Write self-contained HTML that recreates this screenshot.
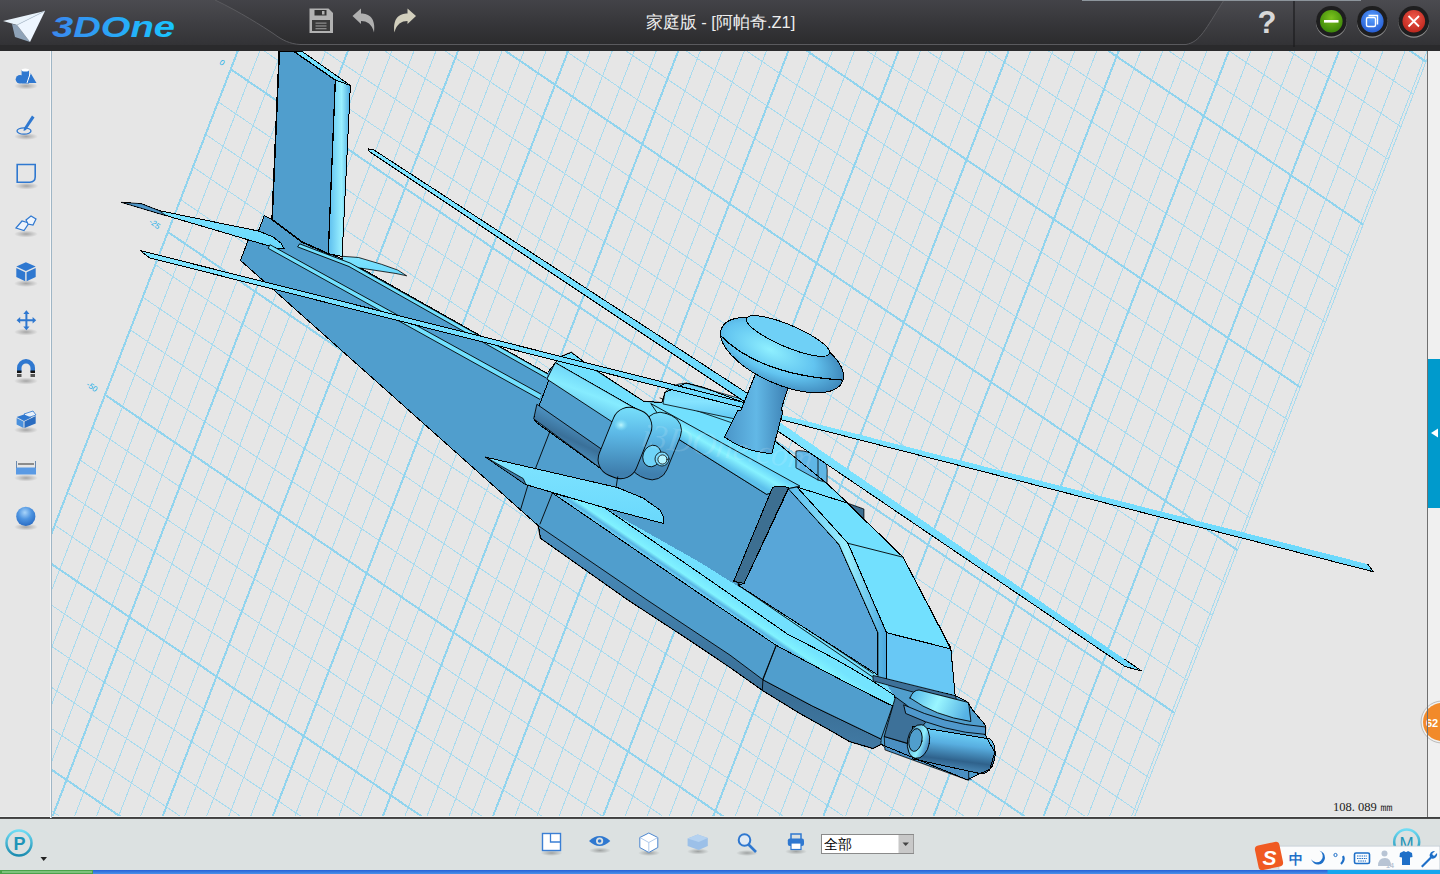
<!DOCTYPE html>
<html><head><meta charset="utf-8">
<style>
html,body{margin:0;padding:0;width:1440px;height:874px;overflow:hidden;background:#e6e6e6;font-family:"Liberation Sans",sans-serif;}
#top{position:absolute;left:0;top:0;width:1440px;height:51px;background:linear-gradient(#3f3f44,#2c2c2e);}
#left{position:absolute;left:0;top:51px;width:51px;height:767px;background:#e6e6e6;}
#leftline{position:absolute;left:51px;top:51px;width:1px;height:767px;background:#9fb6c6;box-shadow:-1px 0 0 #f6f6f6;}
#right{position:absolute;left:1428px;top:51px;width:12px;height:767px;background:#f0f0f0;}
#rightline{position:absolute;left:1427px;top:51px;width:1px;height:766px;background:#707070;}
#bottom{position:absolute;left:0;top:817px;width:1440px;height:57px;background:#dce1e1;}
#bline{position:absolute;left:0;top:816px;width:1440px;height:3px;background:linear-gradient(#eef0f0 0,#eef0f0 33%,#3a3a3a 33%,#505050 100%);}
#task{position:absolute;left:0;top:870px;width:1440px;height:4px;background:#2f6fd4;}
svg{position:absolute;left:0;top:0;}
</style></head><body>
<svg width="1440" height="51" viewBox="0 0 1440 51" style="position:absolute;left:0;top:0">
<defs>
<linearGradient id="tb" x1="0" y1="0" x2="0" y2="1"><stop offset="0" stop-color="#4b4b50"/><stop offset="1" stop-color="#323235"/></linearGradient>
<linearGradient id="tb2" x1="0" y1="0" x2="0" y2="1"><stop offset="0" stop-color="#434348"/><stop offset="1" stop-color="#2b2b2d"/></linearGradient>
<linearGradient id="logo" x1="0" y1="0" x2="1" y2="0"><stop offset="0" stop-color="#3a88ee"/><stop offset="1" stop-color="#19c6ff"/></linearGradient>
<radialGradient id="gbtn" cx="0.5" cy="0.35" r="0.6"><stop offset="0" stop-color="#7cc21e"/><stop offset="1" stop-color="#3f8a0a"/></radialGradient>
<radialGradient id="bbtn" cx="0.5" cy="0.35" r="0.6"><stop offset="0" stop-color="#5aa2ff"/><stop offset="1" stop-color="#2a62d8"/></radialGradient>
<radialGradient id="rbtn" cx="0.5" cy="0.35" r="0.6"><stop offset="0" stop-color="#f0584a"/><stop offset="1" stop-color="#c02a20"/></radialGradient>
</defs>
<rect x="0" y="0" width="1440" height="51" fill="#2b2b2d"/>
<rect x="0" y="0" width="1440" height="46" fill="url(#tb)"/>
<path d="M215 0 C240 12 262 26 274 34 C282 40 290 44 300 44.5 L1186 44.5 C1200 42 1205 30 1224 0 Z" fill="url(#tb2)"/>
<path d="M215 0 C240 12 262 26 274 34 C282 40 290 44 300 44.5 L1186 44.5 C1200 42 1205 30 1224 0" fill="none" stroke="#5a5a5e" stroke-width="1"/>
<rect x="0" y="45" width="1440" height="6" fill="#2a2a2c"/>
<line x1="1082" y1="0.5" x2="1361" y2="0.5" stroke="#8d959c" stroke-width="1"/>
<line x1="1294" y1="1" x2="1294" y2="47" stroke="#1c1c1e" stroke-width="1.2"/>
<!-- plane -->
<polygon points="3,21 45,11 17,25" fill="#e8f2fa"/>
<polygon points="12,24 17,25 30,42 15,37" fill="#8fa3b8"/>
<polygon points="17,25 45,11 30,42" fill="#eef6ff"/>
<line x1="17" y1="25" x2="45" y2="11" stroke="#b8c8d8" stroke-width="0.8"/>
<text x="52" y="36.5" font-family="Liberation Sans, sans-serif" font-weight="bold" font-style="italic" font-size="29" fill="url(#logo)" textLength="123" lengthAdjust="spacingAndGlyphs">3DOne</text>
<!-- save -->
<path d="M309.5 8.5 H328.5 L333 13 V33 H309.5 Z" fill="#b2b2b2"/>
<rect x="314.5" y="10" width="12" height="5.5" fill="#333"/>
<rect x="322" y="11" width="2.5" height="3.5" fill="#b2b2b2"/>
<rect x="312" y="20" width="18" height="11" fill="#3a3a3a"/>
<rect x="315.5" y="22.5" width="11" height="1.3" fill="#888"/><rect x="315.5" y="25.3" width="11" height="1.3" fill="#888"/><rect x="315.5" y="28" width="11" height="1.3" fill="#888"/>
<!-- undo -->
<path d="M352.5 16 L361 8.5 V13.5 C369 13.5 376 18 374 32.5 C372 24 367 21 361 21 V24 Z" fill="#b0b0b0"/>
<!-- redo -->
<path d="M416 16 L407.5 8.5 V13.5 C399.5 13.5 392.5 18 394.5 32.5 C396.5 24 401.5 21 407.5 21 V24 Z" fill="#d2cfbd"/>
<text x="720.5" y="27.5" font-family="Liberation Sans, sans-serif" font-size="16.5" fill="#eeeeee" text-anchor="middle">家庭版 - [阿帕奇.Z1]</text>
<text x="1267" y="32.5" font-family="Liberation Sans, sans-serif" font-weight="bold" font-size="31" fill="#d8d8d8" text-anchor="middle">?</text>
<!-- buttons -->
<g>
<circle cx="1331.3" cy="22.5" r="15.3" fill="#8a8a8a"/>
<circle cx="1331.3" cy="21.3" r="15.3" fill="#1e1e1f"/>
<circle cx="1331.3" cy="21.3" r="11.3" fill="url(#gbtn)"/>
<rect x="1324" y="20" width="14.5" height="2.6" fill="#fff"/>
<circle cx="1372.3" cy="22.5" r="15.3" fill="#8a8a8a"/>
<circle cx="1372.3" cy="21.3" r="15.3" fill="#1e1e1f"/>
<circle cx="1372.3" cy="21.3" r="11.3" fill="url(#bbtn)"/>
<rect x="1366.5" y="17.5" width="9" height="9" rx="1.5" fill="none" stroke="#fff" stroke-width="1.4"/>
<path d="M1368.5 15.5 H1377.5 V24.5" fill="none" stroke="#fff" stroke-width="1.4"/>
<circle cx="1413.8" cy="22.5" r="15.3" fill="#8a8a8a"/>
<circle cx="1413.8" cy="21.3" r="15.3" fill="#1e1e1f"/>
<circle cx="1413.8" cy="21.3" r="11.3" fill="url(#rbtn)"/>
<path d="M1408.5 16 L1419 26.5 M1419 16 L1408.5 26.5" stroke="#fff" stroke-width="1.8"/>
</g>
</svg>
<div id="left"></div>
<div id="right"></div>
<div id="bottom"></div>
<div id="bline"></div>
<div id="task"></div>
<svg width="1440" height="874" viewBox="0 0 1440 874"><defs><clipPath id="vp"><rect x="52" y="51" width="1375" height="765"/></clipPath><linearGradient id="gLight" x1="0" y1="0" x2="0" y2="1"><stop offset="0" stop-color="#6fd3f8"/><stop offset="0.5" stop-color="#86e4ff"/><stop offset="1" stop-color="#5ec6f2"/></linearGradient>
<linearGradient id="gStrip" x1="0" y1="0" x2="1" y2="0"><stop offset="0" stop-color="#5bbdee"/><stop offset="0.6" stop-color="#9af0ff"/><stop offset="1" stop-color="#4aa8de"/></linearGradient>
<linearGradient id="gBlade" x1="0" y1="0" x2="0" y2="1"><stop offset="0" stop-color="#7fe4ff"/><stop offset="1" stop-color="#6ad8fc"/></linearGradient>
<linearGradient id="gPod" x1="0" y1="0" x2="0.35" y2="1"><stop offset="0" stop-color="#62c6f2"/><stop offset="0.35" stop-color="#80e2ff"/><stop offset="0.6" stop-color="#5cb0e0"/><stop offset="1" stop-color="#3f86b8"/></linearGradient>
<linearGradient id="gHull" x1="0" y1="0" x2="0.3" y2="1"><stop offset="0" stop-color="#58a4d6"/><stop offset="0.7" stop-color="#4f98cb"/><stop offset="1" stop-color="#3b78a6"/></linearGradient>
<linearGradient id="gRail" x1="0" y1="0" x2="0.25" y2="1"><stop offset="0" stop-color="#5fbfee"/><stop offset="0.5" stop-color="#90eeff"/><stop offset="1" stop-color="#58b4e6"/></linearGradient>
<radialGradient id="gDome" cx="0.4" cy="0.5" r="0.6"><stop offset="0" stop-color="#8ff0ff"/><stop offset="0.6" stop-color="#62c4f0"/><stop offset="1" stop-color="#3f88bb"/></radialGradient>
<linearGradient id="gMast" x1="0" y1="0" x2="1" y2="0"><stop offset="0" stop-color="#4a95c8"/><stop offset="0.5" stop-color="#62b8e6"/><stop offset="1" stop-color="#3c7fb2"/></linearGradient>
<linearGradient id="gPodTop" x1="0.3" y1="0" x2="0" y2="0.6"><stop offset="0" stop-color="#66cdf5"/><stop offset="0.5" stop-color="#86ecff"/><stop offset="1" stop-color="#5cbbe8"/></linearGradient>
<linearGradient id="gPodBot" x1="0.25" y1="0" x2="0" y2="0.5"><stop offset="0" stop-color="#55a0d2"/><stop offset="0.6" stop-color="#3a7099"/><stop offset="1" stop-color="#4f95c4"/></linearGradient>
<linearGradient id="gBand" x1="0" y1="0" x2="-0.2" y2="1"><stop offset="0" stop-color="#4b90c0"/><stop offset="0.6" stop-color="#3a6e95"/><stop offset="1" stop-color="#4a88b5"/></linearGradient>
<linearGradient id="gTube" gradientUnits="userSpaceOnUse" x1="650" y1="540.1" x2="640.7" y2="553.7"><stop offset="0" stop-color="#74e4fe"/><stop offset="0.55" stop-color="#80f2ff"/><stop offset="0.78" stop-color="#58b4e4"/><stop offset="0.9" stop-color="#6accf2"/><stop offset="1" stop-color="#5cbcea"/></linearGradient>
<linearGradient id="gDeckTube" gradientUnits="userSpaceOnUse" x1="720" y1="441.7" x2="711" y2="457"><stop offset="0" stop-color="#6ad6fa"/><stop offset="0.45" stop-color="#86f2ff"/><stop offset="1" stop-color="#5cc0ec"/></linearGradient>
<linearGradient id="gCap" x1="0" y1="0" x2="0.2" y2="1"><stop offset="0" stop-color="#7ce6ff"/><stop offset="0.45" stop-color="#5cb8e6"/><stop offset="1" stop-color="#3f7fae"/></linearGradient>
<linearGradient id="gGun" gradientUnits="userSpaceOnUse" x1="955" y1="730" x2="950" y2="770"><stop offset="0" stop-color="#6fd6fc"/><stop offset="0.35" stop-color="#58aee0"/><stop offset="0.75" stop-color="#2f628c"/><stop offset="1" stop-color="#4a8ab8"/></linearGradient>
<linearGradient id="gGunCap" x1="0" y1="0" x2="1" y2="0.3"><stop offset="0" stop-color="#4a8fc2"/><stop offset="0.7" stop-color="#8ef0ff"/><stop offset="1" stop-color="#4f98cc"/></linearGradient>
<linearGradient id="gRing" gradientUnits="userSpaceOnUse" x1="915" y1="692" x2="965" y2="716"><stop offset="0" stop-color="#5ec0ec"/><stop offset="0.45" stop-color="#9af6ff"/><stop offset="1" stop-color="#56b2e4"/></linearGradient>
<radialGradient id="gHi"><stop offset="0" stop-color="#c8faff" stop-opacity="0.9"/><stop offset="1" stop-color="#8ef0ff" stop-opacity="0"/></radialGradient>
</defs><g clip-path="url(#vp)">
<path d="M264.04 40L-40.88 830M286.07 40L-18.86 830M308.09 40L3.17 830M330.12 40L25.19 830M374.16 40L69.24 830M396.19 40L91.26 830M418.21 40L113.29 830M440.23 40L135.31 830M484.28 40L179.36 830M506.31 40L201.38 830M528.33 40L223.40 830M550.35 40L245.43 830M594.40 40L289.48 830M616.42 40L311.50 830M638.45 40L333.52 830M660.47 40L355.55 830M704.52 40L399.59 830M726.54 40L421.62 830M748.57 40L443.64 830M770.59 40L465.67 830M814.64 40L509.71 830M836.66 40L531.74 830M858.68 40L553.76 830M880.71 40L575.78 830M924.76 40L619.83 830M946.78 40L641.86 830M968.80 40L663.88 830M990.83 40L685.90 830M1034.87 40L729.95 830M1056.90 40L751.97 830M1078.92 40L774.00 830M1100.95 40L796.02 830M1144.99 40L840.07 830M1167.02 40L862.09 830M1189.04 40L884.12 830M1211.06 40L906.14 830M1255.11 40L950.19 830M1277.13 40L972.21 830M1299.16 40L994.23 830M1321.18 40L1016.26 830M1365.23 40L1060.31 830M1387.25 40L1082.33 830M1409.28 40L1104.35 830M1431.30 40L1126.38 830M1434.38 40L1129.46 830M-70.89 850.70L873.02 1494.40M-58.32 818.14L885.58 1461.84M-45.76 785.57L898.15 1429.28M-33.19 753.01L910.72 1396.72M-8.05 687.89L935.85 1331.60M4.51 655.33L948.42 1299.04M17.08 622.77L960.99 1266.47M29.65 590.21L973.56 1233.91M54.79 525.09L998.69 1168.79M67.35 492.53L1011.26 1136.23M79.92 459.97L1023.83 1103.67M92.49 427.41L1036.40 1071.11M117.62 362.29L1061.53 1005.99M130.19 329.73L1074.10 973.43M142.76 297.17L1086.67 940.87M155.33 264.61L1099.23 908.31M180.46 199.48L1124.37 843.19M193.03 166.92L1136.94 810.63M205.60 134.36L1149.51 778.07M218.17 101.80L1162.07 745.51M243.30 36.68L1187.21 680.38M255.87 4.12L1199.78 647.82M268.44 -28.44L1212.34 615.26M281.00 -61.00L1224.91 582.70M306.14 -126.12L1250.05 517.58M318.71 -158.68L1262.61 485.02M331.28 -191.24L1275.18 452.46M343.84 -223.80L1287.75 419.90M368.98 -288.92L1312.89 354.78M381.55 -321.48L1325.45 322.22M394.11 -354.04L1338.02 289.66M406.68 -386.61L1350.59 257.10M431.82 -451.73L1375.72 191.98M444.39 -484.29L1388.29 159.42M456.95 -516.85L1400.86 126.86M469.52 -549.41L1413.43 94.29M494.66 -614.53L1438.56 29.17M507.22 -647.09L1451.13 -3.39M519.79 -679.65L1463.70 -35.95M532.36 -712.21L1476.27 -68.51" stroke="#a9dbee" stroke-width="1" fill="none" shape-rendering="crispEdges"/>
<path d="M242.02 40L-62.90 830M352.14 40L47.22 830M462.26 40L157.33 830M572.38 40L267.45 830M682.49 40L377.57 830M792.61 40L487.69 830M902.73 40L597.81 830M1012.85 40L707.93 830M1122.97 40L818.04 830M1233.09 40L928.16 830M1343.21 40L1038.28 830M-83.46 883.26L860.45 1526.96M-20.62 720.45L923.29 1364.16M42.22 557.65L986.12 1201.35M105.06 394.85L1048.96 1038.55M167.90 232.05L1111.80 875.75M230.73 69.24L1174.64 712.95M293.57 -93.56L1237.48 550.14M356.41 -256.36L1300.32 387.34M419.25 -419.17L1363.16 224.54M482.09 -581.97L1426.00 61.73" stroke="#91d4ee" stroke-width="2" fill="none" shape-rendering="crispEdges"/>
<text x="221.9" y="62.8" transform="rotate(36 221.9 62.8)" font-family="Liberation Sans, sans-serif" font-size="8" fill="#22aee6" text-anchor="middle" dominant-baseline="central">0</text>
<text x="154.7" y="224.2" transform="rotate(36 154.7 224.2)" font-family="Liberation Sans, sans-serif" font-size="8" fill="#22aee6" text-anchor="middle" dominant-baseline="central">-25</text>
<text x="91.9" y="387" transform="rotate(36 91.9 387)" font-family="Liberation Sans, sans-serif" font-size="8" fill="#22aee6" text-anchor="middle" dominant-baseline="central">-50</text>
</g><g clip-path="url(#vp)"><g id="heli" stroke-linejoin="round" stroke-linecap="round" shape-rendering="crispEdges">
<!-- boom -->
<path d="M264.3 215.6 L272.1 219.7 L302.3 242.1 L328.4 253.1 L350 262 L548.6 374.2 L555 420 L540 524 L538.4 525.8 L240.5 260.4 L248.8 238.4 L258.4 231.1 Z" fill="#509ecd" stroke="#000" stroke-width="1"/>
<!-- left stabilizer (over boom) -->
<path d="M122 202.4 L141.2 203.7 L159 210.6 L259.3 231.2 L273 237 L281 243 L284 248.5 L276 248 L163.2 214.7 Z" fill="url(#gBlade)" stroke="#000" stroke-width="1"/>
<path d="M122 202.4 L141.2 203.7 L159 210.6 L166 215.5 Z" fill="#4f97c9" stroke="#000" stroke-width="0.8"/>
<!-- fin -->
<path d="M279.3 51 L293.5 51 L335.5 80 L328.4 253.8 L302.3 242.1 L272.1 219.7 Z" fill="#509ecd" stroke="#000" stroke-width="1.6"/>
<path d="M293.5 51 L301.5 51 L350.4 85.5 L335.5 80 Z" fill="#72e0fe" stroke="#000" stroke-width="1"/>
<path d="M335.5 80 L350.4 85.5 L342.1 256.5 L328.4 253.8 Z" fill="url(#gStrip)" stroke="#000" stroke-width="1"/>
<!-- right stabilizer -->
<path d="M342.6 256.3 L358.6 257.5 L381.5 264.3 L397.6 270 L406.7 275.8 L396 273.5 L358.6 267.8 L342.6 262 Z" fill="url(#gBlade)" stroke="#000" stroke-width="0.8"/>
<!-- boom rails -->
<path d="M300 244 L350 263 L548.6 374.5 L548 379 L349 266.5 L298 247 Z" fill="#72e0fe" stroke="#000" stroke-width="0.9"/>
<path d="M270.3 244.9 L548 398 L546.5 403 L268.5 248.5 Z" fill="#72e0fe" stroke="#000" stroke-width="0.9"/>

<!-- main fuselage silhouette -->
<path d="M548 372 L555.6 362.5 L561.3 356.3 L571.3 352.5 L590 366.3 L643.8 401.3 L661.9 402.5 L665 392.5 L686.3 383.1 L703.8 387.5 L745 403 L770 436.9 L827.2 483.8 L848 503.3 L863.9 519.3 L903 557.2 L950.8 648 L955.2 695.7 L967 701.7 L973.1 710.6 L985.7 725.5 L985 734.4 L994.7 752.3 L990 769 L967.1 779.8 L881 744.4 L872.9 748.5 L849.5 741.6 L833 732 L798.7 712.8 L763 690.8 L730 667.5 L690 640.6 L627.9 600 L540.6 538.4 L538.4 525.8 L533.7 418.7 Z" fill="#509ecd" stroke="none"/>
<!-- top deck -->
<path d="M555.5 362.8 L561.2 356.4 L571.4 352.1 L589.2 366.2 L643.8 401.3 L661.9 402.5 L665 392.5 L686.3 383.1 L703.8 387.5 L745 403 L770 436.9 L827.2 483.8 L848 503.3 L788.6 488.6 L781 490 L766.5 494.3 L673 435.7 L660 426 L637.2 409.6 Z" fill="#72e0fe" stroke="#000" stroke-width="0.8"/>
<path d="M651.1 403.7 L800 486.1 L788.6 488.6 L781 490 L766.5 494.3 L673 435.7 Z" fill="url(#gDeckTube)" stroke="#000" stroke-width="0.9"/>
<path d="M660 398 L770 436 M700 391 L790 430" fill="none" stroke="#000" stroke-width="0.8"/>
<!-- hull bottom dark band -->
<path d="M538.4 525.8 L647.1 600 L730 655.1 L763 679.8 L812.4 706 L881 739 L881 744.4 L872.9 748.5 L849.5 741.6 L833 732 L798.7 712.8 L763 690.8 L730 667.5 L690 640.6 L627.9 600 L540.6 538.4 Z" fill="url(#gBand)" stroke="#000" stroke-width="0.9"/>
<!-- hull segment split -->
<path d="M552.4 493 L540 524" fill="none" stroke="#000" stroke-width="0.9"/>
<!-- hull front segment -->
<path d="M778 645.5 L890 703.2 L895.7 697.2 L881 739 L812.4 706 L763 679.8 L776.7 644.1 Z" fill="#509ecd" stroke="#000" stroke-width="0.9"/>
<path d="M776.7 644.1 L763 678.5 L762.3 690.8" fill="none" stroke="#000" stroke-width="0.9"/>
<!-- ledge above tube -->
<path d="M603.2 506.8 L622.4 518.5 L700 562.4 L873 671 L886 682 L894 697 L788.9 635.1 Z" fill="#72e0fe" stroke="none"/>
<path d="M734.9 581 L873.2 673.5 M738 585 L873 677.2" fill="none" stroke="#000" stroke-width="0.9"/>
<!-- tube -->
<path d="M552.4 493 L603.2 506.8 L700 573.4 L788.9 635.1 Q850 665 894.8 695.7 L896 706 L890 704.7 Q840 680 776 645.2 L700 594 Z" fill="url(#gTube)" stroke="#000" stroke-width="1"/>
<!-- stub wing -->
<path d="M485.7 457.2 L532.6 468 L617.3 487.5 L643 498 L660 510 L664 518 L663.5 523.5 L603.6 507.5 L525.8 484.6 Z" fill="url(#gBlade)" stroke="#000" stroke-width="1"/>
<path d="M485.7 457.2 L523.2 478.5 L526 484.6 Z" fill="#3f7eaa" stroke="#000" stroke-width="0.8"/>
<path d="M520 460 L480 458" stroke="none"/>

<!-- engine pod body -->
<path d="M555.5 362.8 L637.2 409.6 L622 470 L611.6 476.4 L537.4 423.3 L534 419.1 Z" fill="#509ecd" stroke="#000" stroke-width="1"/>
<path d="M555.5 362.8 L637.2 409.6 L626 431 L547.2 379.3 Z" fill="url(#gPodTop)" stroke="#000" stroke-width="0.9"/>
<path d="M537.2 404.5 L610 455 L611.6 476.4 L534 419.1 Z" fill="url(#gPodBot)" stroke="#000" stroke-width="0.9"/>
<!-- far cap -->
<rect x="637" y="412" width="38" height="68" rx="16" transform="rotate(22 656 446)" fill="url(#gCap)" stroke="#000" stroke-width="0.8"/>
<!-- front cap -->
<rect x="605" y="407" width="40" height="72" rx="17" transform="rotate(22 625 443)" fill="url(#gCap)" stroke="#000" stroke-width="0.9"/>
<ellipse cx="621" cy="425" rx="7" ry="6" fill="url(#gHi)"/>
<!-- nozzle -->
<ellipse cx="652" cy="456" rx="9" ry="11" transform="rotate(20 652 456)" fill="#6fd3f8" stroke="#000" stroke-width="0.8"/>
<circle cx="662" cy="459" r="7" fill="#7fdcff" stroke="#000" stroke-width="0.8"/>
<circle cx="662.5" cy="459.5" r="4.6" fill="#b5f4ff" stroke="#000" stroke-width="0.8"/>

<!-- right pod (far side) -->
<path d="M665 392.5 Q670 384 686.3 383.1 L745 400 L752 411 L740 420 L663.4 404 Z" fill="url(#gLight)" stroke="#000" stroke-width="0.8"/>
<!-- right small exhaust pod -->
<path d="M796.3 451 Q800 449 818 455 Q827 460 827.2 470 L827 482.7 L818 480 L796.3 468 Z" fill="#5fb6e6" stroke="#000" stroke-width="0.8"/>
<line x1="818" y1="456" x2="818" y2="480" stroke="#000" stroke-width="0.8"/>

<!-- canopy -->
<path d="M733.7 581.3 L772.6 487.5 Q776 485 788.6 487.5 L744 583.5 Z" fill="#3d6f91" stroke="#000" stroke-width="1"/>
<path d="M744 583.5 L788.6 488.6 L839 544.6 L877.9 632.7 L877.9 675 L738 585 Z" fill="#58a6d8" stroke="#000" stroke-width="1"/>
<path d="M788.6 488.6 L797 487 L848 543.3 L886.5 632.6 L886.5 680.4 L877.9 680.4 L877.9 632.7 L839 544.6 Z" fill="url(#gStrip)" stroke="#000" stroke-width="0.9"/>
<path d="M797 487 L848 503.3 L903 557.2 L950.8 648.9 L886.5 632.6 L848 543.3 Z" fill="#72e0fe" stroke="#000" stroke-width="1"/>
<path d="M848 543.3 L903 557.2" fill="none" stroke="#000" stroke-width="0.9"/>
<path d="M848 503.3 L863.9 509 L863.9 519.3 Z" fill="#3d6f91" stroke="#000" stroke-width="0.8"/>
<!-- windshield -->
<path d="M886 632.6 L950.8 648.9 L955.2 695.7 L886 680.4 Z" fill="#68c8f5" stroke="#000" stroke-width="1"/>

<!-- nose -->
<path d="M873.4 675.5 L955.2 695.7 L957 701 L916.5 693 L873.4 681 Z" fill="#3d7199" stroke="#000" stroke-width="0.8"/>
<path d="M879.6 739 L885.3 747.8 L930 762 L968.7 776 L972 780 L967.1 779.8 L885.3 750 Z" fill="#3b7099"/>
<path d="M884.6 736.6 L912 745 L968.7 771 L968.7 780.4 L885.3 750 Z" fill="#4a8fc2" stroke="#000" stroke-width="0.8"/>
<path d="M895.7 697.2 L906 704.6 L925.5 722.5 L907.6 743.3 L884.6 736.6 Z" fill="#3d7199" stroke="#000" stroke-width="0.9"/>
<path d="M904 705 Q945 724 985.7 727 L985.5 734.4 Q945 732 906 713.6 Z" fill="#4f98cc" stroke="#000" stroke-width="0.9"/>
<path d="M910 698 Q913 690 919 690 L968.6 702.5 L970.9 721.5 Q935 716 910 698 Z" fill="url(#gRing)" stroke="#000" stroke-width="0.9"/>
<path d="M912 726 L990.4 739 Q996 745 995 756 Q993 772 982 774 L912 758.7 Z" fill="url(#gGun)" stroke="#000" stroke-width="1"/>
<ellipse cx="918.5" cy="741.5" rx="11" ry="17" transform="rotate(10 918.5 741.5)" fill="url(#gGunCap)" stroke="#000" stroke-width="0.9"/>
<ellipse cx="915.5" cy="740" rx="6.5" ry="11.5" transform="rotate(10 915.5 740)" fill="#509ecd" stroke="#000" stroke-width="0.9"/>

<!-- silhouette outline -->
<path d="M548 372 L555.6 362.5 L561.3 356.3 L571.3 352.5 L590 366.3 L643.8 401.3 L661.9 402.5 L665 392.5 L686.3 383.1 L703.8 387.5 L745 403 L770 436.9 L827.2 483.8 L848 503.3 L863.9 519.3 L903 557.2 L950.8 648 L955.2 695.7 L967 701.7 L973.1 710.6 L985.7 725.5 L985 734.4 L994.7 752.3 L990 769 L967.1 779.8 L881 744.4 L872.9 748.5 L849.5 741.6 L833 732 L798.7 712.8 L763 690.8 L730 667.5 L690 640.6 L627.9 600 L540.6 538.4 L538.4 525.8" fill="none" stroke="#000" stroke-width="1"/>
<!-- panel lines -->
<path d="M549.7 432 L535.3 468.9 M528 484.9 L520.8 508.9 M617.7 476.9 L616.1 487.3" fill="none" stroke="#000" stroke-width="0.9"/>
<!-- blades -->
<path d="M368.2 148.9 L374 150 L776 412 L772 420 L368.9 151.2 Z" fill="url(#gBlade)" stroke="#000" stroke-width="1"/>
<path d="M140.3 250.6 L760 406.5 L760 412 L149.4 257.8 Z" fill="url(#gBlade)" stroke="#000" stroke-width="1"/>
<path d="M777.8 413.9 L1367.6 564.1 L1373.6 571.8 L777.8 418.9 Z" fill="url(#gBlade)"/>
<path d="M777.8 418.9 L1373.6 571.8 L1367.6 564.1" fill="none" stroke="#000" stroke-width="1"/>
<path d="M776.5 420 L1125 659.5 L1141.7 671 L1124.9 666.5 L774 428.5 Z" fill="url(#gBlade)"/>
<path d="M774 428.5 L1124.9 666.5 L1141.7 671 L1125 659.5" fill="none" stroke="#000" stroke-width="1"/>

<!-- mast -->
<path d="M755.4 374 L788.3 386.5 L781 410 L783 411 L771.8 453.5 Q745 452 724.5 437 L738 410 L741 410 Z" fill="url(#gMast)" stroke="#000" stroke-width="1"/>
<!-- dome -->
<ellipse cx="782" cy="355" rx="66" ry="29" transform="rotate(24 782 355)" fill="url(#gDome)" stroke="#000" stroke-width="1"/>
<path d="M721 336 Q760 375 842 380" fill="none" stroke="#000" stroke-width="1.2"/>
<ellipse cx="788" cy="336" rx="45" ry="11" transform="rotate(23 788 336)" fill="#6fd0f6" stroke="#000" stroke-width="1"/>
<text x="640" y="446" font-family="Liberation Serif, serif" font-style="italic" font-size="34" fill="#fff" fill-opacity="0.12" transform="rotate(8 640 446)">i3DOne.com</text>
</g>
</g></svg><svg width="1440" height="874" viewBox="0 0 1440 874" style="position:absolute;left:0;top:0">
<defs>
<radialGradient id="shd" cx="0.5" cy="0.5" r="0.5"><stop offset="0" stop-color="#000" stop-opacity="0.28"/><stop offset="1" stop-color="#000" stop-opacity="0"/></radialGradient>
<radialGradient id="sph" cx="0.45" cy="0.3" r="0.7"><stop offset="0" stop-color="#a8d4fa"/><stop offset="0.5" stop-color="#4e94e0"/><stop offset="1" stop-color="#2a6cc4"/></radialGradient>
<linearGradient id="tbar" x1="0" y1="0" x2="0" y2="1"><stop offset="0" stop-color="#2660d6"/><stop offset="1" stop-color="#4a92ea"/></linearGradient>
<linearGradient id="pcirc" x1="0" y1="0" x2="0" y2="1"><stop offset="0" stop-color="#6fdcf4"/><stop offset="1" stop-color="#1c8cb0"/></linearGradient>
</defs>
<!-- left toolbar shadows -->
<g fill="url(#shd)">
<ellipse cx="26" cy="86" rx="12" ry="3.5"/><ellipse cx="26" cy="136.5" rx="12" ry="3.5"/><ellipse cx="26.5" cy="186" rx="12" ry="3.5"/>
<ellipse cx="26" cy="234" rx="12" ry="3.5"/><ellipse cx="26" cy="283.5" rx="12" ry="3.5"/><ellipse cx="26" cy="332" rx="12" ry="3.5"/>
<ellipse cx="26" cy="381" rx="12" ry="3.5"/><ellipse cx="26" cy="430" rx="12" ry="3.5"/><ellipse cx="26" cy="478" rx="12" ry="3.5"/>
<ellipse cx="26" cy="527" rx="12" ry="3.5"/>
</g>
<g fill="#2f78d0">
<!-- icon1 primitives -->
<circle cx="20" cy="79.3" r="4.3"/>
<rect x="21.6" y="70" width="7.4" height="13.5"/>
<ellipse cx="25.3" cy="70" rx="3.7" ry="1.5" fill="#fff"/>
<polygon points="30.7,73.3 36.5,83 26.5,83"/>
<line x1="30" y1="74" x2="27" y2="83" stroke="#fff" stroke-width="1"/>
<!-- icon2 pencil -->
<polygon points="32,115.5 34.5,117.5 26,130 23.5,131 24,128"/>
<ellipse cx="24" cy="131" rx="7" ry="3.2" fill="none" stroke="#2f78d0" stroke-width="1.3"/>
<!-- icon3 square -->
<path d="M17.2 164.5 H35.2 V177 Q35 182 30 182.2 H17.2 Z" fill="none" stroke="#2f78d0" stroke-width="1.6"/>
<!-- icon4 -->
<polygon points="16,228 22,221 29,223 24,230.5" fill="#eef4fc" stroke="#2f78d0" stroke-width="1.2"/>
<polygon points="26,220 31,216 36,219 33,225 28,224" fill="#eef4fc" stroke="#2f78d0" stroke-width="1.2"/>
<!-- icon5 cube -->
<polygon points="25.9,262.2 35.7,266.5 25.9,271 16.3,266.5"/>
<polygon points="16.3,268 25.2,272.3 25.2,281.3 16.3,277" />
<polygon points="26.6,272.3 35.7,268 35.7,277 26.6,281.3"/>
<!-- icon6 move -->
<path d="M26.4 310.3 L29.5 314 H27.4 V319.2 H32.6 V317 L36.2 320.2 L32.6 323.4 V321.2 H27.4 V326.4 H29.5 L26.4 330.2 L23.3 326.4 H25.4 V321.2 H20.2 V323.4 L16.6 320.2 L20.2 317 V319.2 H25.4 V314 H23.3 Z"/>
<!-- icon7 magnet -->
<path d="M17 372 V368 A9 9 0 0 1 35 368 V372 H30.5 V368 A4.5 4.5 0 0 0 21.5 368 V372 Z"/>
<rect x="17" y="370.5" width="4.5" height="2.5" fill="#111"/><rect x="30.5" y="370.5" width="4.5" height="2.5" fill="#111"/>
<rect x="17" y="374" width="4.5" height="3" fill="#555"/><rect x="30.5" y="374" width="4.5" height="3" fill="#555"/>
<!-- icon8 cubes -->
<polygon points="24,414 33,411 36,415 27,418" fill="#e8f0fa" stroke="#2f78d0" stroke-width="0.8"/>
<polygon points="16.6,417 24,414.5 31.5,417.5 24,421"/>
<polygon points="16.6,418 23.5,421.5 23.5,428 16.6,424.5" fill="#4a90dc"/>
<polygon points="24.5,421.5 35.7,416 35.7,423.5 24.5,428" fill="#2a6cc0"/>
<!-- icon9 ruler -->
<rect x="16" y="467.5" width="20" height="7" fill="#5a9ae4"/>
<line x1="16.5" y1="461" x2="16.5" y2="468" stroke="#6a8ab0" stroke-width="1"/>
<line x1="35.5" y1="461" x2="35.5" y2="468" stroke="#6a8ab0" stroke-width="1"/>
<line x1="18" y1="464" x2="34" y2="464" stroke="#333" stroke-width="1"/>
</g>
<circle cx="25.8" cy="516.4" r="9.6" fill="url(#sph)"/>
<!-- bottom bar -->
<g>
<circle cx="19" cy="843" r="12.5" fill="none" stroke="url(#pcirc)" stroke-width="2.5"/>
<text x="19.5" y="849.5" font-family="Liberation Sans, sans-serif" font-weight="bold" font-size="18" fill="#1e94b8" text-anchor="middle">P</text>
<polygon points="40.5,857 47,857 43.7,861" fill="#222"/>
<circle cx="1406.7" cy="842" r="12.5" fill="none" stroke="url(#pcirc)" stroke-width="2.5"/>
<text x="1406.7" y="849" font-family="Liberation Sans, sans-serif" font-size="17" fill="#1e94b8" text-anchor="middle">M</text>
</g>
<g fill="url(#shd)">
<ellipse cx="551.5" cy="853" rx="11" ry="3"/><ellipse cx="600" cy="850.5" rx="11" ry="3"/><ellipse cx="649" cy="853" rx="11" ry="3"/>
<ellipse cx="698" cy="851.5" rx="11" ry="3"/><ellipse cx="747" cy="853" rx="11" ry="3"/><ellipse cx="796" cy="851.5" rx="11" ry="3"/>
</g>
<rect x="542.5" y="833.5" width="18" height="17" fill="#fff" stroke="#3b7fd4" stroke-width="1.4"/>
<path d="M550.5 833.5 V842 H560.5" fill="none" stroke="#3b7fd4" stroke-width="1.3"/>
<path d="M589 841 Q599.6 831 610.3 841 Q599.6 851 589 841 Z" fill="#2f78d0"/>
<circle cx="599.6" cy="841" r="3.6" fill="#dce1e1"/><circle cx="599.6" cy="841" r="1.8" fill="#2f78d0"/>
<polygon points="648.8,833 657.8,837.5 657.8,847.5 648.8,852.5 639.8,847.5 639.8,837.5" fill="#fff" stroke="#4a86d0" stroke-width="1"/>
<path d="M639.8 837.5 L648.8 842.5 L657.8 837.5 M648.8 842.5 V852.5" fill="none" stroke="#9cbde6" stroke-width="0.8"/>
<polygon points="697.7,834.6 707.8,838 707.8,846 698.7,849.9 687.6,846 687.6,838.5" fill="#9cc0e8"/>
<polygon points="687.6,838.5 698.7,842 707.8,838 697.7,834.6" fill="#b5d2f0"/>
<circle cx="744.5" cy="840" r="5.8" fill="#e0eaf4" stroke="#2f78d0" stroke-width="2"/>
<line x1="748.5" y1="844.5" x2="756" y2="852" stroke="#2f78d0" stroke-width="2.6"/>
<rect x="791" y="834" width="10" height="6" fill="none" stroke="#2f78d0" stroke-width="1.5"/>
<rect x="787.8" y="838.5" width="16.2" height="7.5" rx="2" fill="#2f78d0"/>
<rect x="791" y="843" width="10" height="6.5" fill="#fff" stroke="#2f78d0" stroke-width="1.2"/>
<rect x="821.5" y="834.5" width="92" height="19" fill="#fff" stroke="#8a8a8a" stroke-width="1"/>
<rect x="898.5" y="835" width="14.8" height="18" fill="#c8c8c8"/>
<polygon points="902.5,842.5 909,842.5 905.7,846" fill="#444"/>
<text x="823.5" y="849" font-family="Liberation Sans, sans-serif" font-size="14" fill="#000">全部</text>
<text x="1333" y="810.5" font-family="Liberation Serif, serif" font-size="12.5" fill="#222">108. 089 ㎜</text>
<!-- right strip tab -->
<rect x="1428" y="359" width="12" height="149" fill="#009acc"/>
<polygon points="1431,433 1438,428.5 1438,437.5" fill="#fff"/>
<circle cx="1442" cy="722" r="21" fill="#f0f0f0" stroke="#bbb" stroke-width="1"/>
<circle cx="1442" cy="722" r="19" fill="#f28a2a"/>
<text x="1426" y="726.5" font-family="Liberation Sans, sans-serif" font-weight="bold" font-size="11" fill="#fff">62</text>
<!-- IME -->
<rect x="1278.9" y="846.1" width="161" height="23.7" fill="#fbfcfd" stroke="#c4ccd6" stroke-width="0.8"/>
<g transform="rotate(-12 1269 856)"><rect x="1256.5" y="843.5" width="25" height="25" rx="4" fill="#f05a22"/></g>
<text x="1269.5" y="865" font-family="Liberation Sans, sans-serif" font-weight="bold" font-style="italic" font-size="21" fill="#fff" text-anchor="middle">S</text>
<text x="1295.8" y="864" font-family="Liberation Sans, sans-serif" font-weight="bold" font-size="14" fill="#1e6fc8" text-anchor="middle">中</text>
<path d="M1311.22 859.24 A7.0 7.0 0 1 0 1319.55 850.67 A6.2 6.2 0 1 1 1311.22 859.24 Z" fill="#1e6fc8" fill-rule="evenodd"/>
<circle cx="1335.5" cy="855" r="1.6" fill="none" stroke="#1e6fc8" stroke-width="1"/>
<path d="M1343 856 Q1345 860 1341 864" stroke="#1e6fc8" stroke-width="2.2" fill="none"/>
<rect x="1354.5" y="853" width="15" height="10.5" rx="1.5" fill="none" stroke="#1e6fc8" stroke-width="1.6"/>
<path d="M1357 856 H1367 M1357 858.5 H1367 M1358 861 H1366" stroke="#1e6fc8" stroke-width="1.1" stroke-dasharray="1.5 0.8"/>
<circle cx="1384.5" cy="853.5" r="3" fill="#b8c4d4"/><path d="M1378 866 Q1378 858 1385 858 Q1391 858 1391 866 Z" fill="#b8c4d4"/>
<text x="1386" y="868" font-family="Liberation Sans, sans-serif" font-weight="bold" font-size="7" fill="#b8c4d4">14</text>
<path d="M1400 853 L1404 851 Q1406 853 1408 851 L1412 853 L1412.5 857 L1410 857.5 V865 H1402 V857.5 L1399.5 857 Z" fill="#1e6fc8"/>
<path d="M1421 866 L1430 857 A4.5 4.5 0 0 1 1435 851 L1432 854 L1434 856 L1437 853 A4.5 4.5 0 0 1 1431.5 858.5 L1422.5 867.5 Z" fill="#1e6fc8"/>
<!-- taskbar -->
<rect x="0" y="870" width="93" height="4" fill="#4aa14a"/>
<rect x="2" y="871" width="90" height="2" fill="#7cc27c"/>
<rect x="93" y="870" width="1347" height="4" fill="url(#tbar)"/>
<rect x="1327.5" y="870" width="112.5" height="4" fill="#16a6ee"/>
</svg>
<div id="leftline"></div><div id="rightline"></div></body></html>
